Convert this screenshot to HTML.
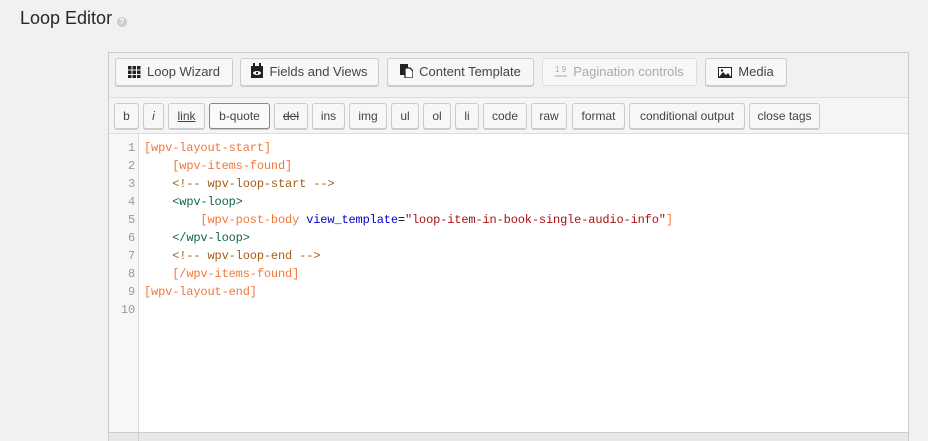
<!DOCTYPE html>
<html><head><style>
html,body{margin:0;width:928px;height:441px;overflow:hidden}
body{background:#f1f1f1;font-family:"Liberation Sans",sans-serif;position:relative}
h1{position:absolute;left:20px;top:8px;margin:0;font-size:18px;font-weight:400;color:#23282d}
.q{position:absolute;left:117px;top:17px;width:10px;height:10px;border-radius:50%;background:#ccc;color:#fff;font-size:8px;line-height:10px;text-align:center;font-weight:bold}
.box{position:absolute;left:108px;top:52px;width:799px;height:400px;border:1px solid #ccc;background:#fff}
.tb1{position:absolute;left:0;top:0;width:799px;height:44px;background:#f1f1f1;border-bottom:1px solid #ddd}
.tb2{position:absolute;left:0;top:45px;width:799px;height:35px;background:#f5f5f5;border-bottom:1px solid #ddd}
.b{position:absolute;box-sizing:border-box;border:1px solid #ccc;background:#f7f7f7;border-radius:3px;color:#444;font-size:13px;text-align:center;box-shadow:0 1px 0 #ccc}
.tb1 .b{top:5px;height:28px;line-height:26px}
.tb2 .b{top:5px;height:26px;line-height:24px;font-size:12px}
.gut{position:absolute;left:0;top:81px;width:29px;height:298px;background:#f7f7f7;border-right:1px solid #ddd}
.code{position:absolute;left:0;top:86px;font-family:"Liberation Mono",monospace;font-size:12px;line-height:18px;letter-spacing:-0.15px;white-space:pre}
.ln{position:absolute;left:0;width:26px;text-align:right;color:#999}
.tx{position:absolute;left:35px;top:0}
.o{color:#f0783c}.c{color:#a55e14}.t{color:#164}.a{color:#00c}.s{color:#a11}
.foot{position:absolute;left:0;top:379px;width:799px;height:30px;background:#e8e8e8;border-top:1px solid #ccc}
.foot div{position:absolute;left:29px;top:0;height:30px;border-left:1px solid #ccc}
svg{vertical-align:-2px;margin-right:6px}
</style></head><body>
<h1>Loop Editor</h1><div class="q">?</div>
<div class="box">
<div class="tb1">
<div class="b" style="left:6px;width:118px"><svg width="13" height="12"><g fill="#222"><rect x="0" y="0" width="3.5" height="3.5"/><rect x="4.5" y="0" width="3.5" height="3.5"/><rect x="9" y="0" width="3.5" height="3.5"/><rect x="0" y="4.5" width="3.5" height="3.5"/><rect x="4.5" y="4.5" width="3.5" height="3.5"/><rect x="9" y="4.5" width="3.5" height="3.5"/><rect x="0" y="9" width="3.5" height="3"/><rect x="4.5" y="9" width="3.5" height="3"/><rect x="9" y="9" width="3.5" height="3"/></g></svg>Loop Wizard</div>
<div class="b" style="left:131px;width:139px"><svg width="12" height="15"><rect x="0" y="3" width="12" height="12" fill="#222"/><rect x="2" y="0" width="2" height="4" fill="#222"/><rect x="8" y="0" width="2" height="4" fill="#222"/><ellipse cx="6" cy="10" rx="4" ry="2" fill="#fff"/><circle cx="6" cy="10" r="1.2" fill="#222"/></svg>Fields and Views</div>
<div class="b" style="left:278px;width:147px"><svg width="13" height="14"><rect x="0" y="0" width="8" height="11" fill="#222"/><path d="M5 4h5l3 3v7H5z" fill="#fff" stroke="#222" stroke-width="1.3"/></svg>Content Template</div>
<div class="b" style="left:433px;width:155px;color:#aaa;box-shadow:none;border-color:#ddd"><svg width="12" height="13"><text x="0" y="7" font-size="8" fill="#aaa" font-family="Liberation Sans">1 9</text><path d="M0 11h12" stroke="#aaa"/></svg>Pagination controls</div>
<div class="b" style="left:596px;width:82px"><svg width="14" height="11"><rect x="0.5" y="0.5" width="13" height="10" fill="#fff" stroke="#222"/><path d="M1 10l4-5 3 3 2-2 3 4z" fill="#222"/><circle cx="4" cy="3.5" r="1.2" fill="#222"/></svg>Media</div>
</div>
<div class="tb2">
<div class="b" style="left:5px;width:25px">b</div>
<div class="b" style="left:34px;width:21px;font-style:italic">i</div>
<div class="b" style="left:59px;width:37px;text-decoration:underline">link</div>
<div class="b" style="left:100px;width:61px;border-color:#888;background:#fafafa">b-quote</div>
<div class="b" style="left:165px;width:34px;text-decoration:line-through">del</div>
<div class="b" style="left:203px;width:33px">ins</div>
<div class="b" style="left:240px;width:38px">img</div>
<div class="b" style="left:282px;width:28px">ul</div>
<div class="b" style="left:314px;width:28px">ol</div>
<div class="b" style="left:346px;width:24px">li</div>
<div class="b" style="left:374px;width:44px">code</div>
<div class="b" style="left:422px;width:36px">raw</div>
<div class="b" style="left:463px;width:53px">format</div>
<div class="b" style="left:520px;width:116px">conditional output</div>
<div class="b" style="left:640px;width:71px">close tags</div>
</div>
<div class="gut"></div>
<div class="code"><div class="ln" style="top:0">1</div><div class="ln" style="top:18px">2</div><div class="ln" style="top:36px">3</div><div class="ln" style="top:54px">4</div><div class="ln" style="top:72px">5</div><div class="ln" style="top:90px">6</div><div class="ln" style="top:108px">7</div><div class="ln" style="top:126px">8</div><div class="ln" style="top:144px">9</div><div class="ln" style="top:162px">10</div><div class="tx"><span class="o">[wpv-layout-start]</span>
    <span class="o">[wpv-items-found]</span>
    <span class="c">&lt;!-- wpv-loop-start --&gt;</span>
    <span class="t">&lt;wpv-loop&gt;</span>
        <span class="o">[wpv-post-body </span><span class="a">view_template</span>=<span class="s">"loop-item-in-book-single-audio-info"</span><span class="o">]</span>
    <span class="t">&lt;/wpv-loop&gt;</span>
    <span class="c">&lt;!-- wpv-loop-end --&gt;</span>
    <span class="o">[/wpv-items-found]</span>
<span class="o">[wpv-layout-end]</span></div></div>
<div class="foot"><div></div></div>
</div>
</body></html>
